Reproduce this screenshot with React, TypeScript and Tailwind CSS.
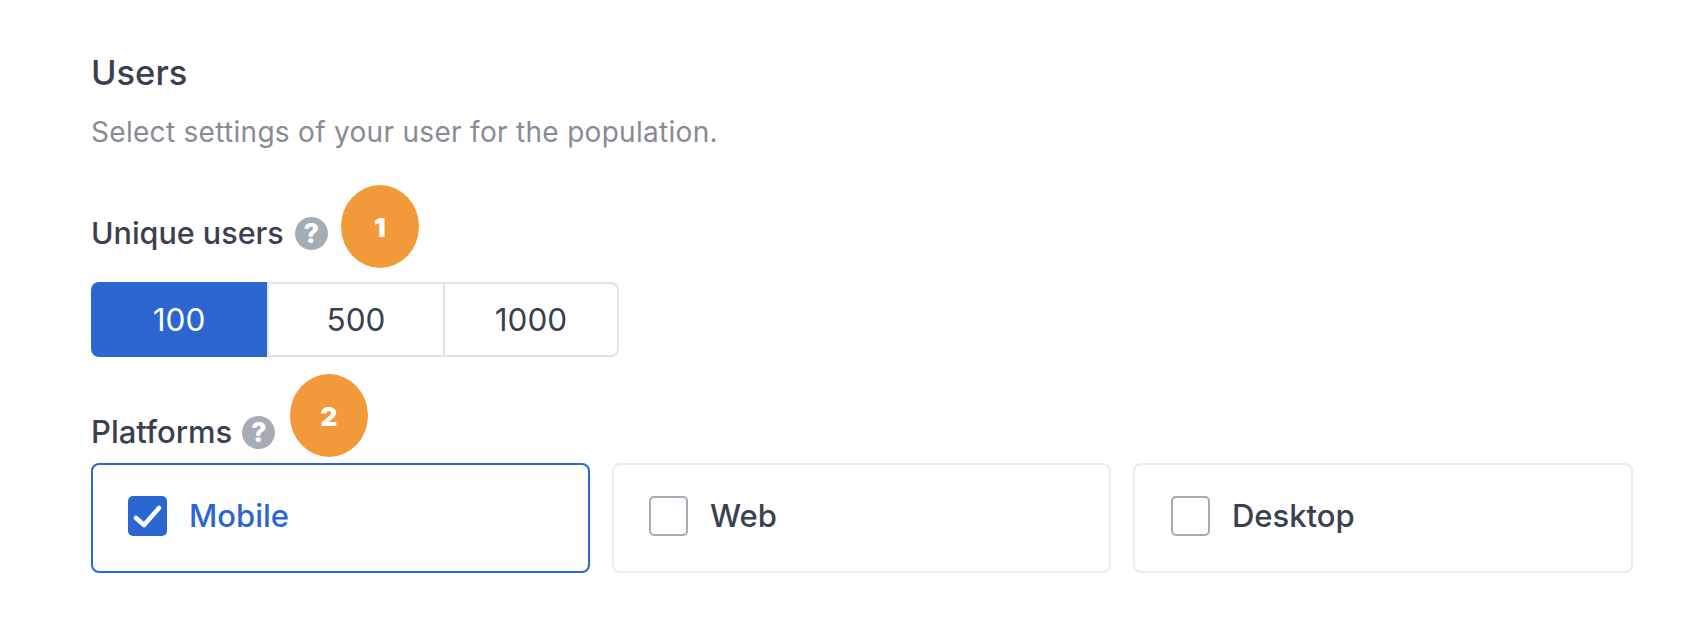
export default function App() {
  const Help = () => (
    <span className="flex h-[33px] w-[33px] items-center justify-center rounded-full bg-[#a6acb6] text-[27px] font-extrabold leading-none text-white">?</span>
  );
  const Badge = ({ n, cls }: { n: string; cls: string }) => (
    <span className={`absolute flex h-[83px] w-[78px] items-center justify-center rounded-[50%] bg-[#f2993a] pt-[2px] text-[26px] font-black text-white ${cls}`}>{n}</span>
  );
  return (
    <div className="h-[633px] w-[1693px] overflow-hidden bg-white pl-[91px] pt-[53px] font-['Inter',sans-serif] text-[#3a4050]">
      <h1 className="text-[34.5px] font-[450] leading-[40px]">Users</h1>
      <p className="mt-[19px] text-[28px] leading-[40px] tracking-[0.3px] text-[#878b94]">Select settings of your user for the population.</p>
      <div className="relative mt-[61px] flex h-[40px] items-center gap-[11px]">
        <span className="text-[30.5px] font-[450] leading-[40px]">Unique users</span>
        <Help />
        <Badge n="1" cls="left-[250px] top-[-28px]" />
      </div>
      <div className="mt-[29px] flex h-[75px] w-[528px] text-[31.5px] font-[380]">
        <div className="flex w-[176px] items-center justify-center rounded-l-[8px] bg-[#2b66d1] text-white">100</div>
        <div className="flex w-[178px] items-center justify-center border-2 border-[#e2e3e9]">500</div>
        <div className="flex flex-1 items-center justify-center rounded-r-[8px] border-y-2 border-r-2 border-[#e2e3e9]">1000</div>
      </div>
      <div className="relative mt-[55px] flex h-[40px] items-center gap-[10px]">
        <span className="text-[31px] font-[450] leading-[40px]">Platforms</span>
        <Help />
        <Badge n="2" cls="left-[199px] top-[-38px]" />
      </div>
      <div className="mt-[11px] flex w-[1542px] gap-[22px]">
        <div className="flex h-[110px] w-[499px] items-center gap-[22px] rounded-[8px] border-2 border-[#2b66d1] pb-[4px] pl-[35px]">
          <span className="flex h-[40px] w-[39px] items-center justify-center rounded-[5px] bg-[#2b66d1]">
            <svg width="32" height="32" viewBox="0 0 32 32" fill="none"><path d="M4 18 L12 25 L27 8" stroke="white" strokeWidth="4.5" strokeLinecap="round" strokeLinejoin="round" /></svg>
          </span>
          <span className="text-[31px] font-[450] text-[#2b66d1]">Mobile</span>
        </div>
        <div className="flex h-[110px] w-[499px] items-center gap-[22px] rounded-[8px] border-2 border-[#ececef] pb-[4px] pl-[35px]">
          <span className="h-[40px] w-[39px] rounded-[5px] border-2 border-[#a6acb6]" />
          <span className="text-[31px] font-[450]">Web</span>
        </div>
        <div className="flex h-[110px] flex-1 items-center gap-[22px] rounded-[8px] border-2 border-[#ececef] pb-[4px] pl-[36px]">
          <span className="h-[40px] w-[39px] rounded-[5px] border-2 border-[#a6acb6]" />
          <span className="text-[31px] font-[450]">Desktop</span>
        </div>
      </div>
    </div>
  );
}
